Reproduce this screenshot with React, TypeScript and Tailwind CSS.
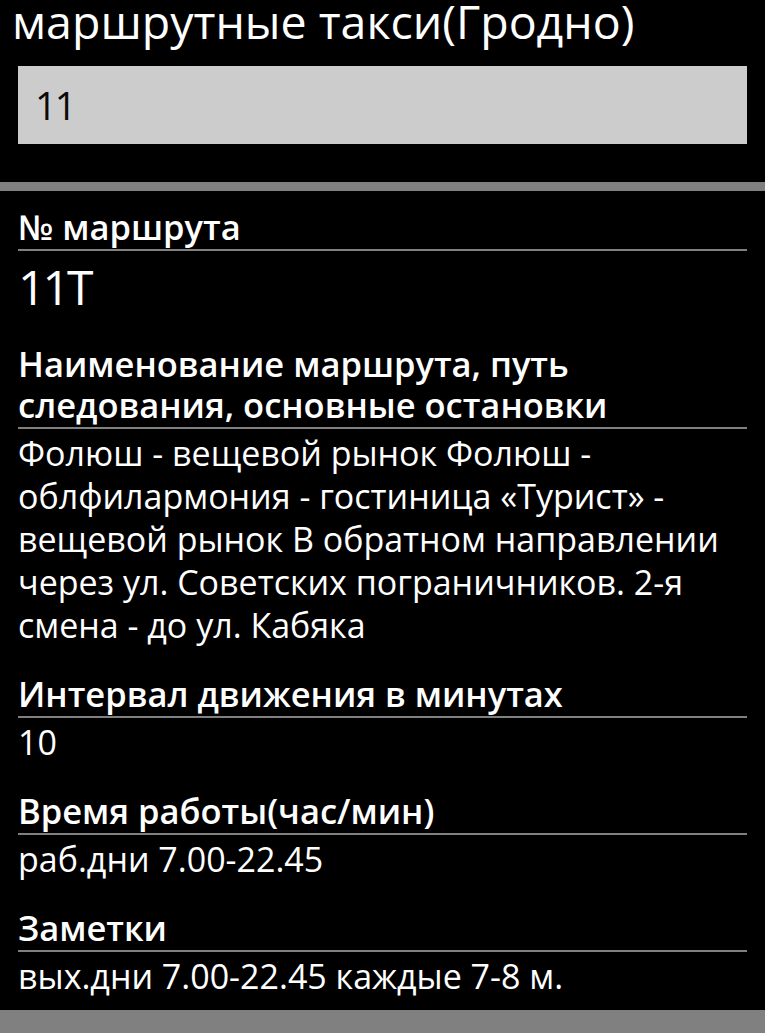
const font = { fontFamily: '"Open Sans", "Noto Sans", sans-serif' };

type Row = { label: string; value: string; big?: boolean };

const rows: Row[] = [
  { label: "№ маршрута", value: "11Т", big: true },
  {
    label: "Наименование маршрута, путь следования, основные остановки",
    value:
      "Фолюш - вещевой рынок Фолюш - облфилармония - гостиница «Турист» - вещевой рынок В обратном направлении через ул. Советских пограничников. 2-я смена - до ул. Кабяка",
  },
  { label: "Интервал движения в минутах", value: "10" },
  { label: "Время работы(час/мин)", value: "раб.дни 7.00-22.45" },
  { label: "Заметки", value: "вых.дни 7.00-22.45 каждые 7-8 м." },
];

function Field({ row, first }: { row: Row; first: boolean }) {
  return (
    <div className={first ? "" : "mt-[26px]"}>
      <div className="border-b-2 border-[#808080] pb-[2px] text-[34.5px] font-semibold leading-[41px] text-white">
        {row.label}
      </div>
      {row.big ? (
        <div className="mt-[6px] mb-[1px] text-[48px] leading-[60px] tracking-[-3px] text-white">
          {row.value}
        </div>
      ) : (
        <div className="mt-[3px] text-[34px] leading-[43px] text-white">{row.value}</div>
      )}
    </div>
  );
}

export default function App() {
  return (
    <div className="flex h-screen w-full flex-col overflow-hidden bg-black" style={font}>
      <h1 className="h-[66px] px-[12px] text-[46.5px] leading-[42px] font-normal text-white">
        маршрутные такси(Гродно)
      </h1>
      <div className="mx-[18px] flex h-[78px] items-center bg-[#cccccc] px-[17px] pt-[1px] text-[38px] font-normal tracking-[-2px] text-[#0a0a0a]">
        11
      </div>
      <div className="mt-[38px] h-[9px] bg-[#808080]" />
      <div className="flex-1 px-[18px] pt-[15px]">
        {rows.map((row, i) => (
          <Field key={row.label} row={row} first={i === 0} />
        ))}
      </div>
      <div className="h-[23px] bg-[#808080]" />
    </div>
  );
}
